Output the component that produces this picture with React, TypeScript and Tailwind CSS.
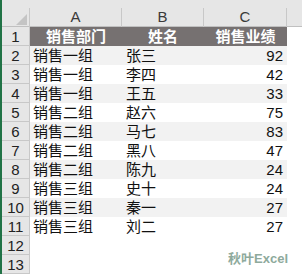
const rows = [
  ["销售一组", "张三", 92],
  ["销售一组", "李四", 42],
  ["销售一组", "王五", 33],
  ["销售二组", "赵六", 75],
  ["销售二组", "马七", 83],
  ["销售二组", "黑八", 47],
  ["销售二组", "陈九", 24],
  ["销售三组", "史十", 24],
  ["销售三组", "秦一", 27],
  ["销售三组", "刘二", 27],
] as const;

const font = "font-['Liberation_Sans','Noto_Sans_CJK_SC',sans-serif]";

function ColHead({ label, w }: { label: string; w: string }) {
  return (
    <div className={`${w} h-[27px] flex flex-col`}>
      <div className="mt-auto h-[19px] border-r border-[#c8c8c8] flex items-center justify-center text-[15px] text-[#3a3a3a]">
        {label}
      </div>
    </div>
  );
}

function RowNum({ n }: { n: number }) {
  return (
    <div className="w-[28px] h-[19px] shrink-0 bg-[#e6e6e6] border-r border-b border-[#c8c8c8] flex items-center justify-center text-[15px] text-[#222] leading-none">
      {n}
    </div>
  );
}

export default function App() {
  return (
    <div className={`relative w-[302px] h-[274px] overflow-hidden bg-white flex ${font}`}>
      <div className="w-[2px] shrink-0 bg-[#217346]" />
      <div className="flex-1 flex flex-col">
        {/* column headers */}
        <div className="flex h-[27px] shrink-0 bg-[#e6e6e6] border-b border-[#c0c0c0]">
          <div className="w-[28px] h-[27px] flex flex-col">
            <div className="mt-auto h-[19px] border-r border-[#c8c8c8] flex items-end justify-end pr-[2px] pb-[2px]">
              <svg width="11" height="11" viewBox="0 0 11 11">
                <polygon points="11,0 11,11 0,11" fill="#c4c4c4" />
              </svg>
            </div>
          </div>
          <ColHead label="A" w="w-[92px]" />
          <ColHead label="B" w="w-[82px]" />
          <ColHead label="C" w="w-[83px]" />
          <div className="flex-1" />
        </div>

        {/* header row */}
        <div className="flex">
          <RowNum n={1} />
          <div className="flex w-[257px] h-[19px] bg-[#767171] text-white font-bold text-[15px] leading-[19px]">
            <div className="w-[92px] text-center">销售部门</div>
            <div className="w-[82px] text-center">姓名</div>
            <div className="w-[83px] text-center">销售业绩</div>
          </div>
        </div>

        {rows.map((r, i) => (
          <div key={i} className="flex">
            <RowNum n={i + 2} />
            <div
              className={`flex w-[257px] h-[19px] text-[15px] leading-[19px] text-[#111] ${
                i % 2 === 0 ? "bg-[#f2f2f2]" : "bg-white"
              }`}
            >
              <div className="w-[92px] pl-[3px]">{r[0]}</div>
              <div className="w-[82px] pl-[4px]">{r[1]}</div>
              <div className="w-[83px] pr-[4px] text-right">{r[2]}</div>
            </div>
          </div>
        ))}

        <div className="flex">
          <RowNum n={12} />
        </div>
        <div className="flex">
          <RowNum n={13} />
        </div>
      </div>

      <div className="absolute right-[14px] bottom-[9px] text-[13px] font-bold text-[#8eaa9c] leading-none">
        秋叶Excel
      </div>
    </div>
  );
}
